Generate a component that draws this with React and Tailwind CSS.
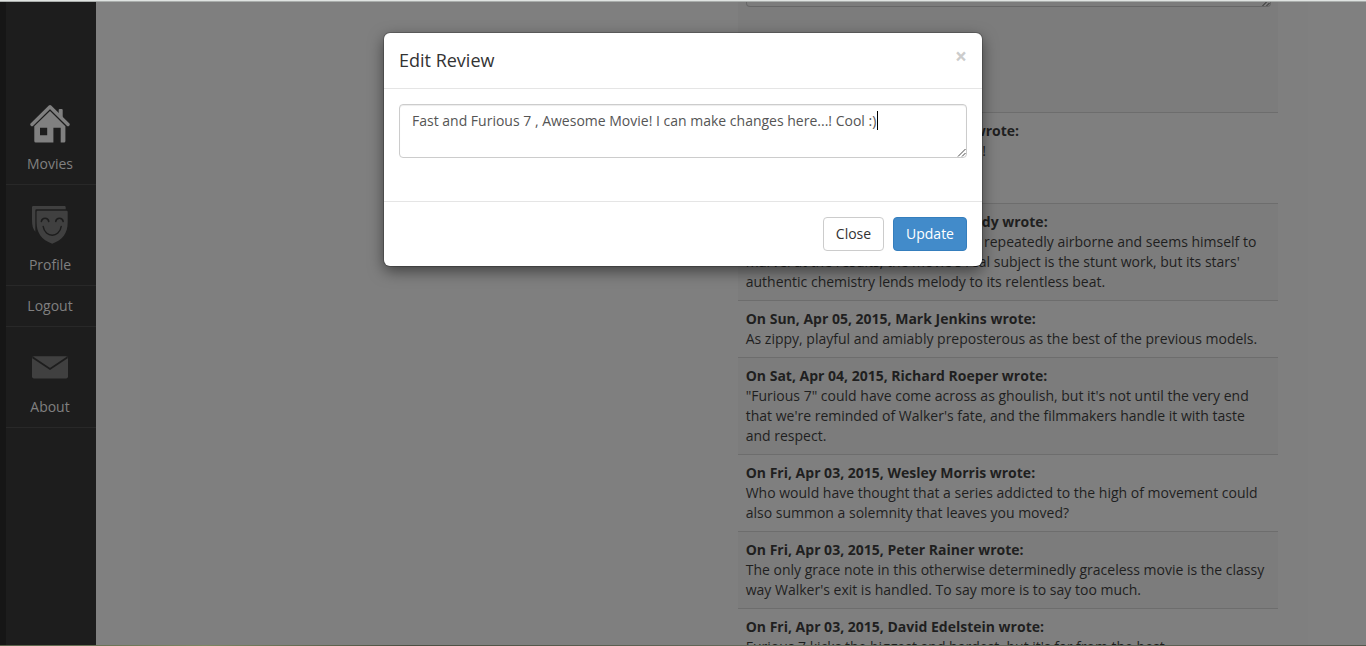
const reviews = [
  { head: "On Mon, Apr 06, 2015, guest user wrote:", lines: ["Fast and Furious 7 , Awesome Movie!"], tall: true, shift: "-ml-[3px]" },
  {
    head: "On Mon, Apr 06, 2015, Richard Brody wrote:",
    lines: [
      "The director, James Wan, sends cars repeatedly airborne and seems himself to",
      "marvel at the results; the movie's real subject is the stunt work, but its stars'",
      "authentic chemistry lends melody to its relentless beat.",
    ],
  },
  {
    head: "On Sun, Apr 05, 2015, Mark Jenkins wrote:",
    lines: ["As zippy, playful and amiably preposterous as the best of the previous models."],
  },
  {
    head: "On Sat, Apr 04, 2015, Richard Roeper wrote:",
    lines: [
      "\"Furious 7\" could have come across as ghoulish, but it's not until the very end",
      "that we're reminded of Walker's fate, and the filmmakers handle it with taste",
      "and respect.",
    ],
  },
  {
    head: "On Fri, Apr 03, 2015, Wesley Morris wrote:",
    lines: [
      "Who would have thought that a series addicted to the high of movement could",
      "also summon a solemnity that leaves you moved?",
    ],
  },
  {
    head: "On Fri, Apr 03, 2015, Peter Rainer wrote:",
    lines: [
      "The only grace note in this otherwise determinedly graceless movie is the classy",
      "way Walker's exit is handled. To say more is to say too much.",
    ],
  },
  {
    head: "On Fri, Apr 03, 2015, David Edelstein wrote:",
    lines: ["Furious 7 kicks the biggest and hardest, but it's far from the best."],
  },
];

function Grip({ className }) {
  return (
    <svg className={className} width="9" height="9" viewBox="0 0 9 9" fill="none" stroke="currentColor" strokeWidth="0.9">
      <path d="M1 8.500 8.500 1M5 8.500 8.500 5" />
    </svg>
  );
}

function HouseIcon() {
  return (
    <svg width="40" height="40" viewBox="0 0 40 40" className="text-[#808080]">
      <path d="M2 20.500 20 2.800l18 17.700" fill="none" stroke="currentColor" strokeWidth="3.400" strokeLinejoin="round" strokeLinecap="round" />
      <path d="M28.700 6a1 1 0 0 1 1-1h2a1 1 0 0 1 1 1v7.500l-4-4Z" fill="currentColor" />
      <path
        d="M20 7 35.400 22.200V37a1.500 1.500 0 0 1-1.500 1.500h-3.200V23.700h-7.300v14.800H5.800A1.500 1.500 0 0 1 4.300 37V22.200ZM10 23.700v7.600h7.200v-7.600Z"
        fill="currentColor"
        fillRule="evenodd"
      />
    </svg>
  );
}

function MasksIcon() {
  return (
    <svg width="38" height="38" viewBox="0 0 38 38" className="text-[#404040]">
      <path d="M1 1.200Q1 0 2.200 0H33.500Q34.700 0 34.700 1.200V3.200H5.500Q4.300 3.200 4.300 4.400V25.800C2 23 1 19.500 1 14Z" fill="currentColor" />
      <path d="M5.600 6Q5.600 4.800 6.800 4.800H35.500Q36.700 4.800 36.700 6V16C36.700 27 32 33.500 21.200 37.800C10.300 33.500 5.600 27 5.600 16Z" fill="currentColor" />
      <g fill="none" stroke="#1d1d1d" strokeWidth="1.500" strokeLinecap="round">
        <path d="M10.300 15.500c.8-4.200 6.700-4.200 7.500 0M24.700 15.500c.8-4.200 6.700-4.200 7.500 0M12.200 20.500c1.800 11.500 16.200 11.500 18 0" />
      </g>
    </svg>
  );
}

function MailIcon() {
  return (
    <svg width="36" height="24" viewBox="0 0 36 24">
      <rect y="0.200" width="36" height="22.300" rx="2" fill="#404040" />
      <path d="M0.500 1.200 18 13 35.500 1.200" fill="none" stroke="#1d1d1d" strokeWidth="1.800" />
    </svg>
  );
}

function NavItem({ label, className, children }) {
  return (
    <a className={`flex flex-col items-center border-b border-[#282828] text-sm leading-5 text-[#808080] ${className}`}>
      {children}
      <span>{label}</span>
    </a>
  );
}

function ReviewTable() {
  return (
    <div className="ml-[598px] w-[540px] text-sm leading-5 text-[#1f1f1f]">
      <div className="h-[110px] bg-[#7c7c7c] px-2">
        <div className="flex h-[5px] w-[525px] justify-end overflow-hidden rounded-b border-x border-b border-[#666]">
          <Grip className="-mt-1 text-[#222]" />
        </div>
      </div>
      {reviews.map((r, i) => (
        <div
          key={r.head}
          className={`border-t border-[#6d6d6d] py-2 pr-2 pl-[7.7px] ${i % 2 ? "bg-[#7c7c7c]" : "bg-[#7f7f7f]"} ${r.tall ? "h-[91px]" : ""}`}
        >
          <div className={`font-bold ${r.shift ?? ""}`}>{r.head}</div>
          {r.lines.map((l) => (
            <div key={l} className="whitespace-nowrap">{l}</div>
          ))}
        </div>
      ))}
    </div>
  );
}

function Dialog() {
  return (
    <div className="absolute top-[33px] left-[384px] w-[598px] rounded-md bg-white text-sm text-[#333] shadow-[0_5px_15px_rgba(0,0,0,0.5),0_0_0_1px_rgba(0,0,0,0.2)]">
      <div className="flex h-14 justify-between border-b border-[#e5e5e5] px-[15px] pt-[15px]">
        <h4 className="text-lg leading-[25px]">Edit Review</h4>
        <button className="h-4 text-[21px] leading-[17px] font-bold text-[#ccc]">×</button>
      </div>
      <div className="h-[112px] p-[15px]">
        <div className="relative flex h-[54px] rounded border border-[#ccc] px-3 py-1.5 leading-5 text-[#555] shadow-[inset_0_1px_1px_rgba(0,0,0,0.075)]">
          <span>Fast and Furious 7 , Awesome Movie! I can make changes here...! Cool :)</span>
          <span className="ml-px h-[19px] w-px bg-black" />
          <Grip className="absolute right-0 bottom-0 text-[#333]" />
        </div>
      </div>
      <div className="flex h-[65px] justify-end gap-[9px] border-t border-[#e5e5e5] p-[15px]">
        <button className="h-[34px] w-[61px] rounded border border-[#ccc] bg-white leading-5">Close</button>
        <button className="h-[34px] w-[74px] rounded border border-[#357ebd] bg-[#428bca] leading-5 text-white">Update</button>
      </div>
    </div>
  );
}

export default function App() {
  return (
    <div className="relative flex h-[646px] w-[1366px] flex-col overflow-hidden bg-[#808080] font-['Open_Sans',sans-serif]">
      <div className="h-0.5 shrink-0 border-b border-[#a9adab] bg-[#dfe3e1]" />
      <div className="flex h-[643px] shrink-0 overflow-hidden">
        <nav className="h-full w-24 border-l-[6px] border-[#161616] bg-[#1d1d1d] pt-[102px]">
          <NavItem label="Movies" className="h-[81px] gap-[10px] pr-0.5">
            <HouseIcon />
          </NavItem>
          <NavItem label="Profile" className="h-[101px] gap-[11px] pt-[21px] pr-0.5">
            <MasksIcon />
          </NavItem>
          <NavItem label="Logout" className="h-[41px] pt-[10px] pr-0.5" />
          <NavItem label="About" className="h-[101px] gap-[17px] pt-[29px] pr-0.5">
            <MailIcon />
          </NavItem>
        </nav>
        <main className="ml-11 w-[1168px] bg-[#7f7f7f]">
          <ReviewTable />
        </main>
      </div>
      <div className="h-px shrink-0 bg-[linear-gradient(90deg,#59614a,#7d8762_15%,#4b4f42_30%,#6a7060_60%,#54584d)]" />
      <Dialog />
    </div>
  );
}
